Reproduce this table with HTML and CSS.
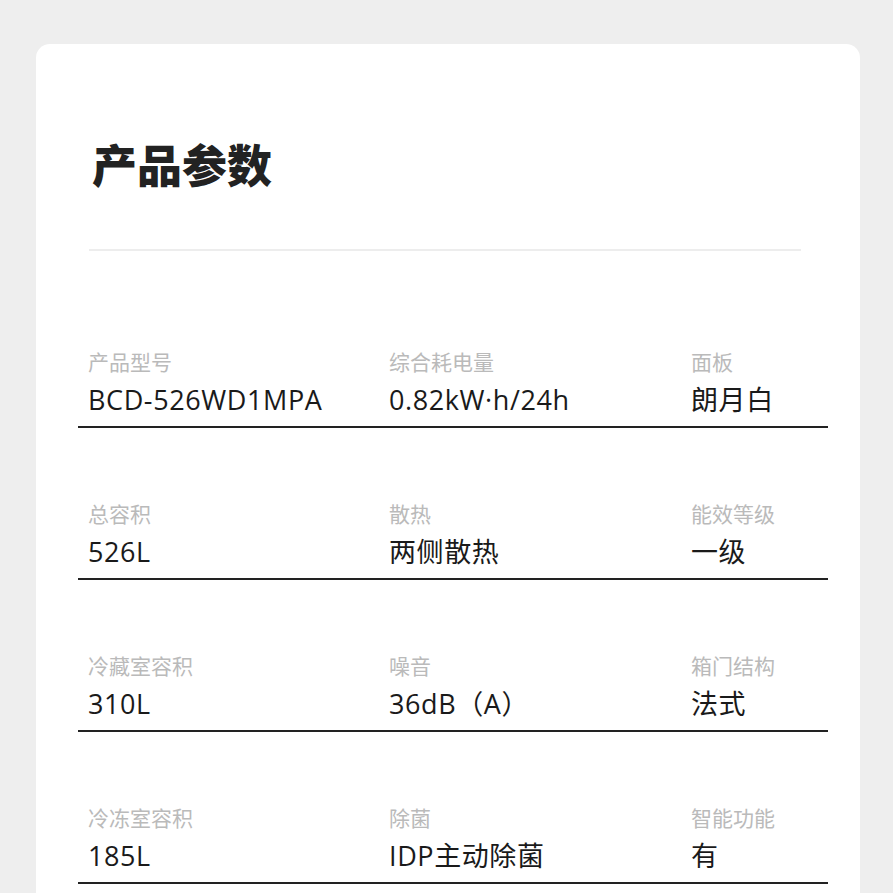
FILE: index.html
```html
<!DOCTYPE html>
<html lang="zh-CN">
<head>
<meta charset="utf-8">
<link rel="stylesheet" href="styles.css">
</head>
<body>
<div class="card">
  <h1 class="title">产品参数</h1>
  <div class="divider"></div>
  <div class="rows">
    <div class="row">
      <div class="cell"><div class="label">产品型号</div><div class="value">BCD-526WD1MPA</div></div>
      <div class="cell"><div class="label">综合耗电量</div><div class="value">0.82kW·h/24h</div></div>
      <div class="cell"><div class="label">面板</div><div class="value">朗月白</div></div>
    </div>
    <div class="row">
      <div class="cell"><div class="label">总容积</div><div class="value">526L</div></div>
      <div class="cell"><div class="label">散热</div><div class="value">两侧散热</div></div>
      <div class="cell"><div class="label">能效等级</div><div class="value">一级</div></div>
    </div>
    <div class="row">
      <div class="cell"><div class="label">冷藏室容积</div><div class="value">310L</div></div>
      <div class="cell"><div class="label">噪音</div><div class="value">36dB（A）</div></div>
      <div class="cell"><div class="label">箱门结构</div><div class="value">法式</div></div>
    </div>
    <div class="row">
      <div class="cell"><div class="label">冷冻室容积</div><div class="value">185L</div></div>
      <div class="cell"><div class="label">除菌</div><div class="value">IDP主动除菌</div></div>
      <div class="cell"><div class="label">智能功能</div><div class="value">有</div></div>
    </div>
  </div>
</div>
</body>
</html>
```
FILE: styles.css
```css
html, body {
  margin: 0;
  padding: 0;
  background: #eeeeee;
  font-family: "Noto Sans CJK SC", "Noto Sans", sans-serif;
  overflow: hidden;
}
.card {
  margin: 44px 33px 0 36px;
  background: #ffffff;
  border-radius: 14px 14px 0 0;
  padding-top: 98px;
  height: 1000px;
}
.title {
  margin: 0 0 0 56px;
  font-size: 45px;
  line-height: 44px;
  font-weight: 800;
  color: #222222;
}
.divider {
  margin: 63px 59px 0 53px;
  height: 2px;
  background: #ededed;
}
.rows {
  margin: 25px 32px 0 42px;
}
.row {
  display: grid;
  grid-template-columns: 301px 302px 1fr;
  padding: 75px 0 12px 10px;
  border-bottom: 2px solid #222222;
}
.label {
  font-size: 21px;
  line-height: 21px;
  color: #bababa;
}
.value {
  margin-top: 14px;
  font-family: "Open Sans", "Noto Sans CJK SC", sans-serif;
  font-size: 27px;
  line-height: 28px;
  letter-spacing: 0.6px;
  color: #1a1a1a;
}
```
